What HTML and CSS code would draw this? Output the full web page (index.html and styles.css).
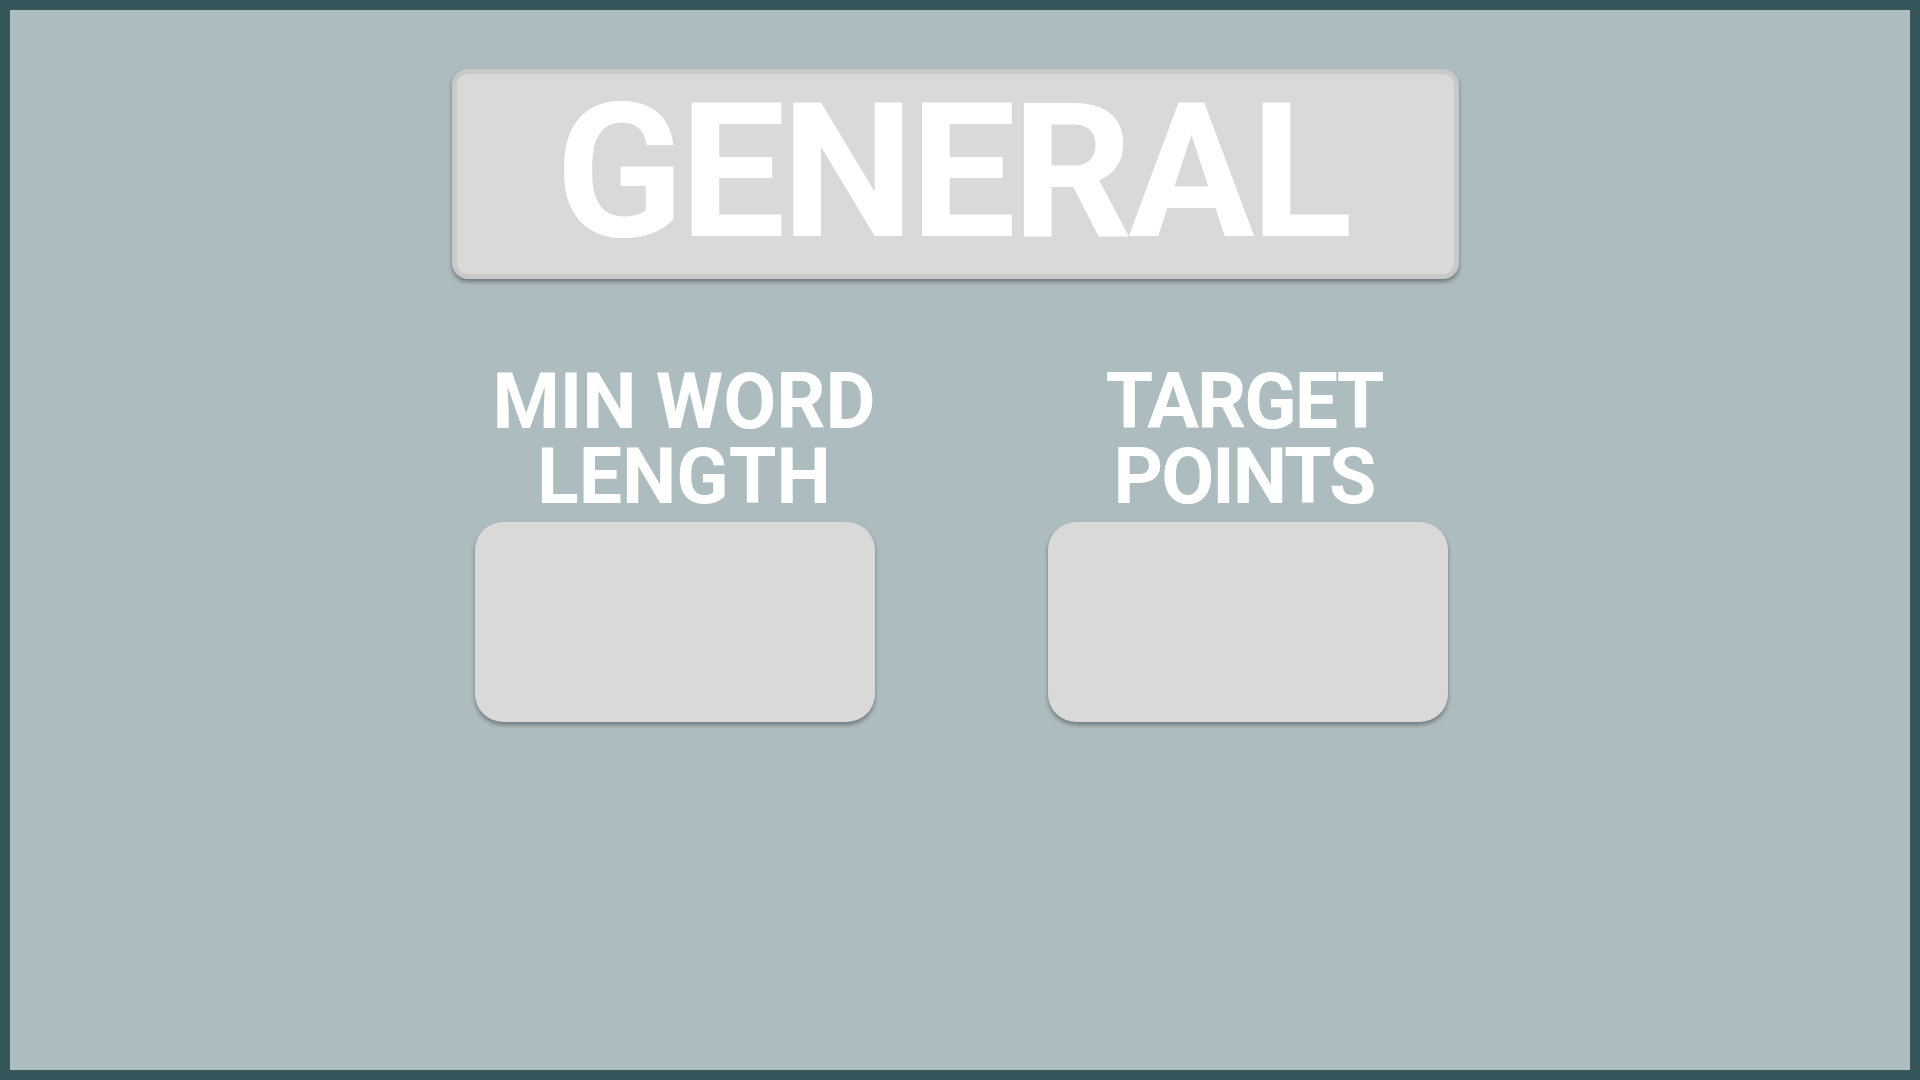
FILE: index.html
```html
<!DOCTYPE html>
<html lang="en">
<head>
  <meta charset="UTF-8">
  <title>Settings</title>
  <link rel="stylesheet" href="styles.css">
</head>
<body>

  <div class="frame">
    <div class="title-box">
      <h1>GENERAL</h1>
    </div>

    <div class="settings">
      <div class="setting">
        <label class="label-left" for="minWord">MIN WORD<br>LENGTH</label>
        <div class="value-box" id="minWord"></div>
      </div>
      <div class="setting">
        <label class="label-right" for="targetPoints">TARGET<br>POINTS</label>
        <div class="value-box" id="targetPoints"></div>
      </div>
    </div>
  </div>

</body>
</html>
```

FILE: styles.css
```css
html, body {
  margin: 0;
  padding: 0;
}

body {
  font-family: Roboto, "Liberation Sans", Arial, sans-serif;
}

.frame {
  box-sizing: border-box;
  width: 1920px;
  height: 1080px;
  border: 10px solid #35575b;
  background-color: #adbcbf;
  display: flex;
  flex-direction: column;
  align-items: center;
}

.title-box {
  box-sizing: border-box;
  width: 1007px;
  height: 210px;
  margin-top: 59px;
  margin-right: 9px;
  padding-top: 4px;
  padding-right: 7px;
  border: 5px solid #c9c9c9;
  border-radius: 16px;
  background-color: #d9d9d9;
  box-shadow: 0 3px 4px rgba(0, 0, 0, 0.35);
  text-align: center;
}

h1 {
  margin: 0;
  font-size: 188px;
  line-height: 1;
  font-weight: bold;
  letter-spacing: -4px;
  color: #fff;
}

.settings {
  display: flex;
  gap: 173px;
  margin-top: 86px;
  margin-left: 3px;
}

.setting {
  width: 400px;
  display: flex;
  flex-direction: column;
  align-items: center;
}

label {
  display: block;
  align-self: stretch;
  margin: 0 -40px;
  font-size: 77px;
  line-height: 75px;
  font-weight: bold;
  white-space: nowrap;
  color: #fff;
  text-align: center;
}

.label-left {
  padding-left: 18px;
}

.label-right {
  padding-right: 8px;
  letter-spacing: -2px;
}

.value-box {
  width: 400px;
  height: 200px;
  margin-top: 7px;
  border-radius: 28px;
  background-color: #d9d9d9;
  box-shadow: 0 3px 4px rgba(0, 0, 0, 0.35);
}
```
